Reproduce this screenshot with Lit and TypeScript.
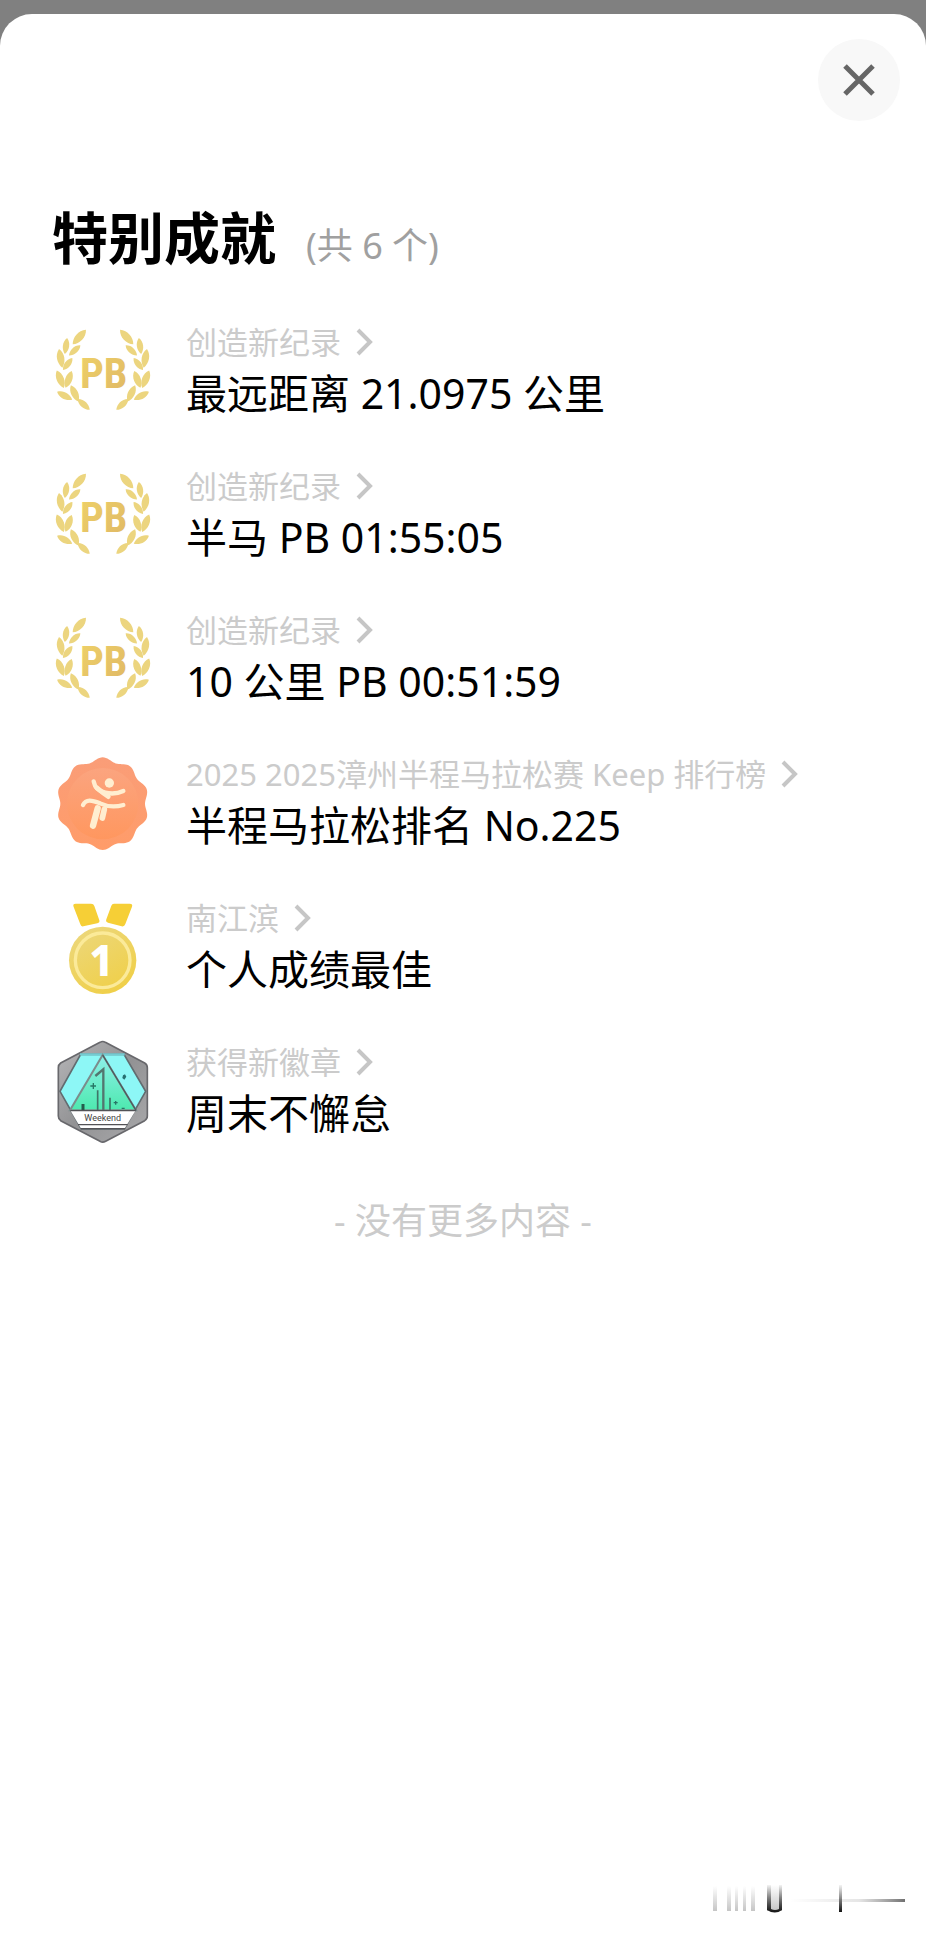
import { LitElement, html, svg, css } from "lit";
import { customElement, property } from "lit/decorators.js";

type IconName = "pb" | "runner" | "medal" | "weekend";

interface Achievement {
  icon: IconName;
  label: string;
  value: string;
}

const ACHIEVEMENTS: Achievement[] = [
  { icon: "pb", label: "创造新纪录", value: "最远距离 21.0975 公里" },
  { icon: "pb", label: "创造新纪录", value: "半马 PB 01:55:05" },
  { icon: "pb", label: "创造新纪录", value: "10 公里 PB 00:51:59" },
  { icon: "runner", label: "2025 2025漳州半程马拉松赛 Keep 排行榜", value: "半程马拉松排名 No.225" },
  { icon: "medal", label: "南江滨", value: "个人成绩最佳" },
  { icon: "weekend", label: "获得新徽章", value: "周末不懈怠" },
];

// One side of the laurel: centre x, centre y, tilt, scale
const LEAVES = [
  [118, 84, 42, 1.1],
  [78, 111, 8, 0.9],
  [104, 124, 48, 0.85],
  [62, 148, -10, 1.05],
  [83, 165, 38, 0.85],
  [61, 211, -22, 1.05],
  [86, 211, 20, 1],
  [74, 260, -62, 0.95],
  [104, 253, -25, 1],
  [131, 286, -48, 0.9],
];

// Outline of the ten-lobed badge
const scallop = (radius: number, wave: number) =>
  Array.from({ length: 180 }, (_, i) => {
    const a = (i * Math.PI) / 90;
    const r = radius + wave * Math.cos(10 * a);
    return `${(188 + r * Math.sin(a)).toFixed(1)},${(194 - r * Math.cos(a)).toFixed(1)}`;
  }).join(" ");

const laurelSide = () =>
  LEAVES.map(
    ([x, y, tilt, scale]) => svg`<path
      d="M0-27C15-12 13 13 0 27C-13 13-15-12 0-27Z"
      transform="translate(${x} ${y}) rotate(${tilt}) scale(${scale})"/>`,
  );

const ICONS = {
  pb: () => html`
    <svg viewBox="36 30 306 306" aria-hidden="true">
      <defs>
        <linearGradient id="gold" x1="0" y1="0" x2="1" y2="1">
          <stop offset="0" stop-color="#efd268" />
          <stop offset="1" stop-color="#dfb765" />
        </linearGradient>
      </defs>
      <g fill="#ecd57f">${laurelSide()}</g>
      <g fill="#ecd57f" transform="translate(378 0) scale(-1 1)">${laurelSide()}</g>
      <text class="pb" x="191" y="236" text-anchor="middle" fill="url(#gold)">PB</text>
    </svg>
  `,
  runner: () => html`
    <svg viewBox="36 36 306 306" aria-hidden="true">
      <defs>
        <linearGradient id="coral" x1="0" y1="0" x2="0" y2="1">
          <stop offset="0" stop-color="#fa9d78" />
          <stop offset="1" stop-color="#ff9c69" />
        </linearGradient>
        <linearGradient id="disc" x1="0" y1="0" x2="0" y2="1">
          <stop offset="0" stop-color="#fba47f" />
          <stop offset="1" stop-color="#ff975f" />
        </linearGradient>
      </defs>
      <polygon points=${scallop(133, 6)} fill="url(#coral)" />
      <circle cx="188" cy="194" r="107" fill="url(#disc)" />
      <g fill="none" stroke="#ffeed0" stroke-linecap="round" stroke-linejoin="round">
        <path d="M161 127C164 144 176 157 196 161C218 166 235 163 250 156" stroke-width="13" />
        <path d="M170 146L191 163L205 173" stroke-width="14" />
        <path d="M129 198C138 180 155 183 180 193C203 204 225 205 250 198" stroke-width="13" />
        <path d="M173 208L159 260" stroke-width="19" />
        <path d="M193 211L187 237" stroke-width="17" />
      </g>
      <circle cx="208" cy="132" r="14" fill="#ffeed0" />
    </svg>
  `,
  medal: () => html`
    <svg viewBox="36 18 306 306" aria-hidden="true">
      <defs>
        <linearGradient id="coin" x1="0.2" y1="0" x2="0.8" y2="1">
          <stop offset="0" stop-color="#ecd77b" />
          <stop offset="1" stop-color="#f0cf45" />
        </linearGradient>
      </defs>
      <path
        d="M107 44H153Q161 44 163 51L178 94Q180 101 172 103L130 112Q123 114 121 106L101 54Q97 44 107 44Z"
        fill="#f6cf36"
      />
      <path
        d="M222 44H269Q279 44 276 53L256 105Q253 114 245 112L204 101Q196 99 199 91L214 50Q216 44 222 44Z"
        fill="#f6cf36"
      />
      <circle cx="188" cy="214" r="101" fill="url(#coin)" />
      <circle cx="188" cy="214" r="82" fill="none" stroke="#fbea99" stroke-width="10" />
      <text class="rank" x="184" y="261" text-anchor="middle" fill="#fff">1</text>
    </svg>
  `,
  weekend: () => html`
    <svg viewBox="36 30 306 306" aria-hidden="true">
      <defs>
        <linearGradient id="mint" x1="0" y1="0" x2="0" y2="1">
          <stop offset="0" stop-color="#8ff0ea" />
          <stop offset="1" stop-color="#4de9ae" />
        </linearGradient>
        <linearGradient id="steel" x1="0" y1="0" x2="1" y2="1">
          <stop offset="0" stop-color="#b7b7b9" />
          <stop offset="0.5" stop-color="#929294" />
          <stop offset="1" stop-color="#aaaaac" />
        </linearGradient>
      </defs>
      <path
        d="M180 40Q188 35 196 40L314 102Q322 107 322 116V261Q322 270 314 275L197 337Q188 342 180 337L62 275Q55 270 55 261V116Q55 107 62 102Z"
        fill="url(#steel)"
        stroke="#68686c"
        stroke-width="5"
      />
      <path d="M122 76H252L317 187L253 300H124L60 187Z" fill="#8df7f6" stroke="#626c70" stroke-width="5" />
      <path d="M120 76H254" stroke="#74cbd2" stroke-width="7" />
      <path d="M188 78L288 244H90Z" fill="url(#mint)" stroke="#7b8c8c" stroke-width="6" />
      <path d="M188 78L288 244" stroke="#4b5b5e" stroke-width="4" />
      <path d="M166 141L190 121V244" fill="none" stroke="#53756f" stroke-width="7" />
      <path d="M173 184V244M210 206V244" stroke="#3f7568" stroke-width="5" />
      <path d="M129 225V244" stroke="#245b4b" stroke-width="9" />
      <path
        d="M151 171H168M160 162V180M221 221H233M227 216V227M245 238H254"
        stroke="#287665"
        stroke-width="4"
      />
      <path d="M249 139L255 136L259 143L253 152L247 147Z" fill="#276f70" />
      <path d="M92 246H286L253 300H124Z" fill="#fff" />
      <path d="M91 245H287M114 287H263M122 299H256" stroke="#525256" stroke-width="4" />
      <text class="ribbon" x="188" y="276" text-anchor="middle" fill="#444">Weekend</text>
    </svg>
  `,
};

@customElement("achievement-row")
class AchievementRow extends LitElement {
  @property({ attribute: false }) item!: Achievement;

  static styles = css`
    :host {
      display: flex;
      align-items: center;
      gap: 32px;
    }
    svg {
      display: block;
      overflow: visible;
    }
    .icon {
      flex: none;
      width: 102px;
    }
    .copy {
      min-width: 0;
    }
    .label {
      display: flex;
      align-items: center;
      gap: 14px;
      color: #cbcbcb;
      font-size: 31px;
      line-height: 46px;
      text-decoration: none;
    }
    .chevron {
      flex: none;
      width: 18px;
      height: 28px;
    }
    .value {
      margin: 0;
      color: #000;
      font-size: 41px;
      line-height: 56px;
    }
    .pb {
      font: 700 126px "Liberation Sans Narrow", "Roboto Condensed", Roboto, sans-serif;
    }
    .rank {
      font: 800 126px "Noto Sans", sans-serif;
    }
    .ribbon {
      font: 400 27px Roboto, sans-serif;
    }
  `;

  render() {
    const { icon, label, value } = this.item;
    return html`
      <div class="icon">${ICONS[icon]()}</div>
      <div class="copy">
        <a class="label" href="#">
          <span>${label}</span>
          <svg class="chevron" viewBox="0 0 18 28" aria-hidden="true">
            <path d="M3 2L15 14L3 26" fill="none" stroke="#c6c6c6" stroke-width="4" />
          </svg>
        </a>
        <p class="value">${value}</p>
      </div>
    `;
  }
}

@customElement("app-root")
class AppRoot extends LitElement {
  static styles = css`
    :host {
      display: block;
      box-sizing: border-box;
      min-height: 100vh;
      padding-top: 14px;
      background: #808080;
      font-family: "Noto Sans", "Noto Sans CJK SC", sans-serif;
    }
    .sheet {
      display: flex;
      flex-direction: column;
      box-sizing: border-box;
      min-height: calc(100vh - 14px);
      padding: 25px 26px 18px 52px;
      border-radius: 32px 32px 0 0;
      background: #fff;
    }
    .close {
      display: grid;
      place-items: center;
      align-self: flex-end;
      width: 82px;
      height: 82px;
      padding: 0;
      border: 0;
      border-radius: 50%;
      background: #f8f8f8;
    }
    .cross {
      width: 34px;
      height: 34px;
    }
    .heading {
      display: flex;
      align-items: baseline;
      gap: 30px;
      margin-top: 80px;
      line-height: 72px;
    }
    .title {
      margin: 0;
      font-size: 56px;
      font-weight: 700;
    }
    .count {
      color: #a0a0a0;
      font-size: 36px;
    }
    .list {
      display: flex;
      flex-direction: column;
      gap: 42px;
      margin: 37px 0 0;
      padding: 0;
      list-style: none;
    }
    .end {
      margin: 52px 26px 0 0;
      color: #cbcbcb;
      font-size: 36px;
      line-height: 56px;
      text-align: center;
    }
    .trace {
      align-self: flex-end;
      width: 200px;
      height: 34px;
      margin-top: auto;
    }
  `;

  render() {
    return html`
      <main class="sheet">
        <button class="close" type="button" aria-label="关闭">
          <svg class="cross" viewBox="0 0 34 34" aria-hidden="true">
            <path d="M3 3L31 31M31 3L3 31" stroke="#666" stroke-width="5" />
          </svg>
        </button>
        <header class="heading">
          <h1 class="title">特别成就</h1>
          <span class="count">(共 6 个)</span>
        </header>
        <ul class="list">
          ${ACHIEVEMENTS.map((item) => html`<li><achievement-row .item=${item}></achievement-row></li>`)}
        </ul>
        <p class="end">- 没有更多内容 -</p>
        <svg class="trace" viewBox="0 0 200 34" overflow="visible" aria-hidden="true">
          <defs>
            <linearGradient id="fall" x1="0" y1="0" x2="0" y2="1">
              <stop offset="0" stop-color="#555" stop-opacity="0" />
              <stop offset="1" stop-color="#555" stop-opacity="0.34" />
            </linearGradient>
            <linearGradient id="ink" x1="0" y1="0" x2="0" y2="1">
              <stop offset="0" stop-color="#222" stop-opacity="0.05" />
              <stop offset="1" stop-color="#111" />
            </linearGradient>
            <linearGradient id="line" x1="0" y1="0" x2="1" y2="0">
              <stop offset="0" stop-color="#555" stop-opacity="0" />
              <stop offset="0.6" stop-color="#555" stop-opacity="0.15" />
              <stop offset="1" stop-color="#333" stop-opacity="0.7" />
            </linearGradient>
          </defs>
          <g fill="url(#fall)">
            <rect x="13" y="5" width="4" height="25" />
            <rect x="27" y="5" width="4" height="25" />
            <rect x="35" y="5" width="3" height="25" />
            <rect x="43" y="5" width="3" height="25" />
            <rect x="51" y="5" width="4" height="25" />
            <rect x="67" y="4" width="15" height="26" />
          </g>
          <path d="M67 4H71V28Q75 30 79 28V4H82V29Q75 34 67 29Z" fill="url(#ink)" />
          <rect x="139" y="4" width="3" height="27" fill="url(#ink)" />
          <rect x="90" y="18" width="115" height="3" fill="url(#line)" />
        </svg>
      </main>
    `;
  }
}
